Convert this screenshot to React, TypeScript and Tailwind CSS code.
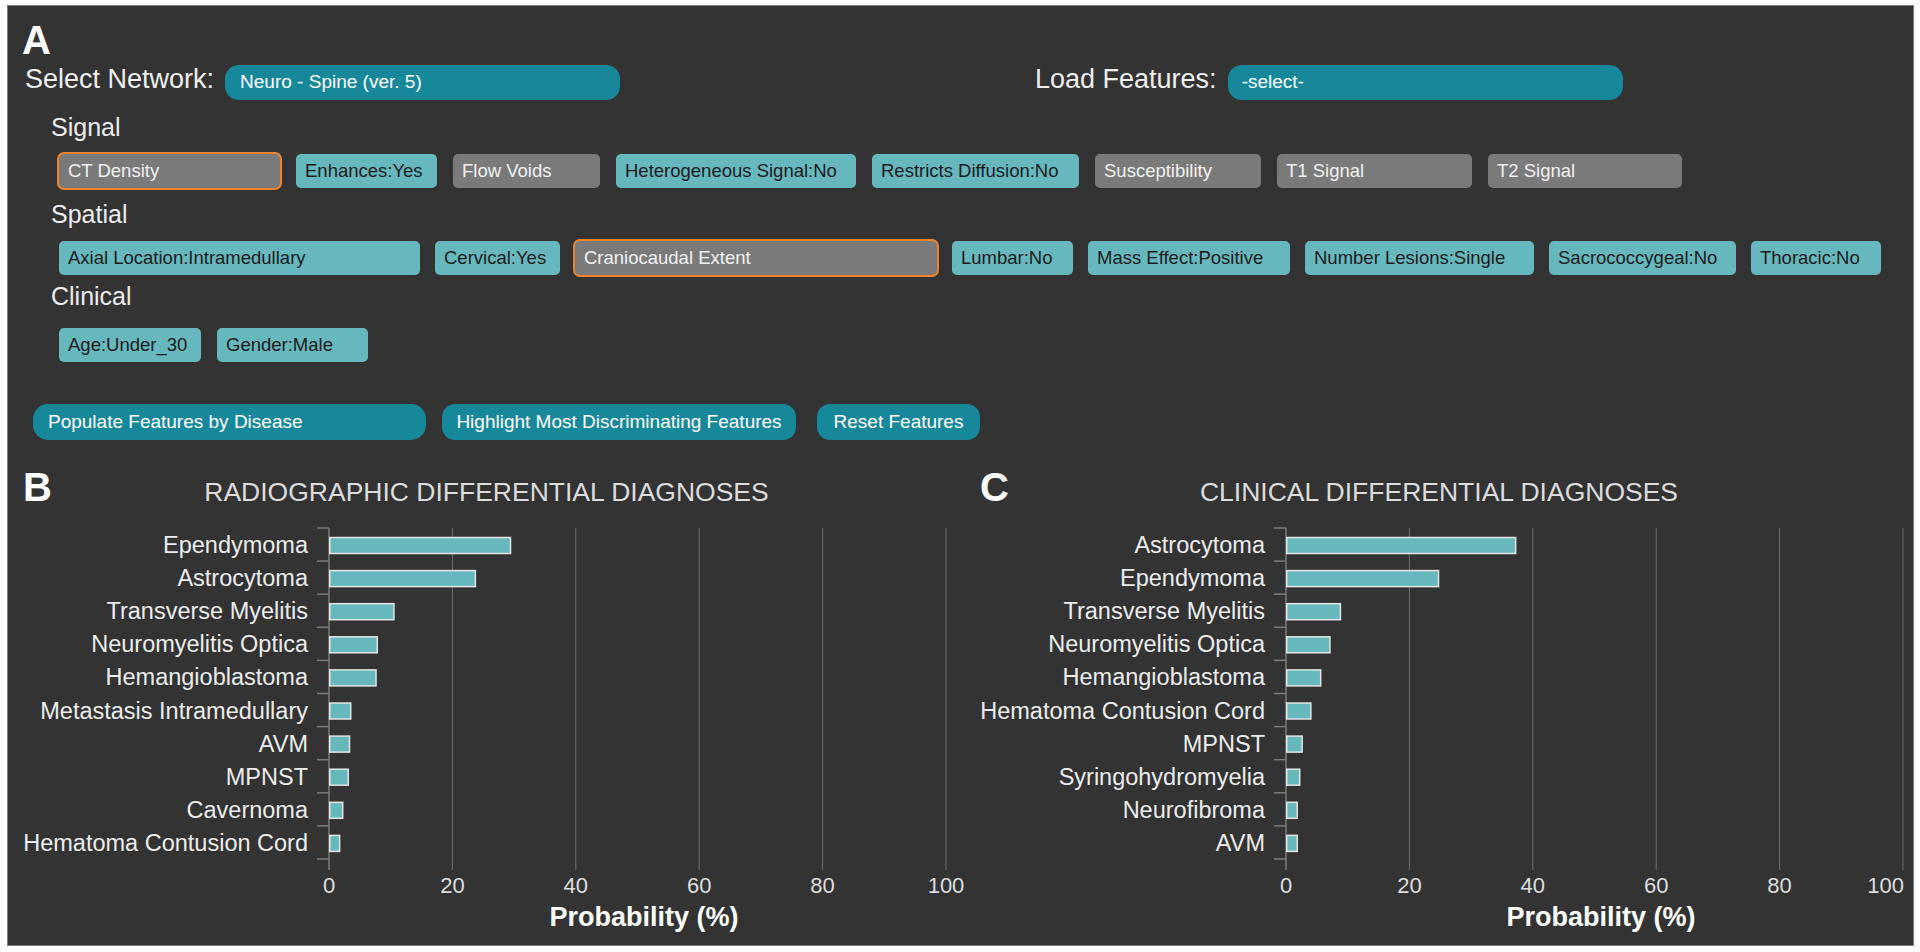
import React from 'react'

interface Feature {
  label: string
  w: string
  set: boolean
  focus?: boolean
}

interface Diagnosis {
  name: string
  p: number
}

const signal: Feature[] = [
  { label: 'CT Density', w: 'w-[221px]', set: false, focus: true },
  { label: 'Enhances:Yes', w: 'w-[141px]', set: true },
  { label: 'Flow Voids', w: 'w-[147px]', set: false },
  { label: 'Heterogeneous Signal:No', w: 'w-[240px]', set: true },
  { label: 'Restricts Diffusion:No', w: 'w-[207px]', set: true },
  { label: 'Susceptibility', w: 'w-[166px]', set: false },
  { label: 'T1 Signal', w: 'w-[195px]', set: false },
  { label: 'T2 Signal', w: 'w-[194px]', set: false },
]

const spatial: Feature[] = [
  { label: 'Axial Location:Intramedullary', w: 'w-[361px]', set: true },
  { label: 'Cervical:Yes', w: 'w-[125px]', set: true },
  { label: 'Craniocaudal Extent', w: 'w-[362px]', set: false, focus: true },
  { label: 'Lumbar:No', w: 'w-[121px]', set: true },
  { label: 'Mass Effect:Positive', w: 'w-[202px]', set: true },
  { label: 'Number Lesions:Single', w: 'w-[229px]', set: true },
  { label: 'Sacrococcygeal:No', w: 'w-[187px]', set: true },
  { label: 'Thoracic:No', w: 'w-[130px]', set: true },
]

const clinical: Feature[] = [
  { label: 'Age:Under_30', w: 'w-[142px]', set: true },
  { label: 'Gender:Male', w: 'w-[151px]', set: true },
]

const radiographic: Diagnosis[] = [
  { name: 'Ependymoma', p: 29.3 },
  { name: 'Astrocytoma', p: 23.6 },
  { name: 'Transverse Myelitis', p: 10.4 },
  { name: 'Neuromyelitis Optica', p: 7.7 },
  { name: 'Hemangioblastoma', p: 7.5 },
  { name: 'Metastasis Intramedullary', p: 3.4 },
  { name: 'AVM', p: 3.2 },
  { name: 'MPNST', p: 3.0 },
  { name: 'Cavernoma', p: 2.1 },
  { name: 'Hematoma Contusion Cord', p: 1.6 },
]

const clinicalDx: Diagnosis[] = [
  { name: 'Astrocytoma', p: 37.1 },
  { name: 'Ependymoma', p: 24.6 },
  { name: 'Transverse Myelitis', p: 8.7 },
  { name: 'Neuromyelitis Optica', p: 7.0 },
  { name: 'Hemangioblastoma', p: 5.5 },
  { name: 'Hematoma Contusion Cord', p: 3.9 },
  { name: 'MPNST', p: 2.5 },
  { name: 'Syringohydromyelia', p: 2.1 },
  { name: 'Neurofibroma', p: 1.7 },
  { name: 'AVM', p: 1.7 },
]

function Chip({ f }: { f: Feature }) {
  const color = f.set ? 'bg-[#67b8be] text-[#1c1c1c]' : 'bg-[#7a7a7a] text-[#f0f0f0]'
  const ring = f.focus ? 'ring-2 ring-[#f0842c]' : ''
  return (
    <div className={`${f.w} ${color} ${ring} h-[34px] rounded-[5px] pl-[9px] flex items-center text-[18.5px] leading-none whitespace-nowrap`}>
      {f.label}
    </div>
  )
}

function GroupLabel({ children }: { children: React.ReactNode }) {
  return <div className="ml-[43px] h-[25px] text-[25px] leading-[25px] text-[#ededed]">{children}</div>
}

// chart drawn in page coordinates through the viewBox
function Chart({ x0, vx, vw, data, endLast }: { x0: number; vx: number; vw: number; data: Diagnosis[]; endLast?: boolean }) {
  const top = 528
  const band = 33.1
  const k = 6.17
  const ticks = [0, 20, 40, 60, 80, 100]
  return (
    <svg width={vw} height={433} viewBox={`${vx} 507 ${vw} 433`} className="block">
      {ticks.slice(1).map(t => (
        <line key={t} x1={x0 + t * k} x2={x0 + t * k} y1={top} y2={870} stroke="#6e6e6e" strokeWidth={1} />
      ))}
      <line x1={x0} x2={x0} y1={top} y2={870} stroke="#7c7c7c" strokeWidth={1.5} />
      {Array.from({ length: 11 }).map((_, i) => (
        <line key={i} x1={x0 - 12} x2={x0} y1={top + i * band} y2={top + i * band} stroke="#7c7c7c" strokeWidth={1.5} />
      ))}
      {data.map((d, i) => (
        <g key={d.name}>
          <rect
            x={x0 + 0.75}
            y={top + i * band + 9.5}
            width={d.p * k}
            height={16}
            fill="#66b8bd"
            stroke="#e4e4e4"
            strokeWidth={1.5}
          />
          <text x={x0 - 21} y={top + (i + 0.5) * band + 8.5} textAnchor="end" fontSize={23.5} fill="#ececec">
            {d.name}
          </text>
        </g>
      ))}
      {ticks.map(t => (
        <text
          key={t}
          x={endLast && t === 100 ? x0 + t * k + 1 : x0 + t * k}
          y={893}
          textAnchor={endLast && t === 100 ? 'end' : 'middle'}
          fontSize={22}
          fill="#dedede"
        >
          {t}
        </text>
      ))}
      <text x={x0 + 315} y={926} textAnchor="middle" fontSize={27} fontWeight="bold" fill="#ffffff">
        Probability (%)
      </text>
    </svg>
  )
}

function Header({ letter, title }: { letter: string; title: string }) {
  return (
    <div className="h-[40px] grid grid-cols-[1fr_auto_1fr] items-baseline">
      <span className="ml-[15px] text-[40px] leading-[40px] font-bold text-white">{letter}</span>
      <span className="text-[26.5px] leading-[26px] text-[#dcdcdc]">{title}</span>
      <span />
    </div>
  )
}

export default function App() {
  return (
    <div className="min-h-screen bg-white pt-[5px] pl-[7px] font-['Liberation_Sans',Arial,sans-serif]">
      <div className="w-[1907px] h-[941px] border border-[#7a7a7a] bg-[#333333] overflow-hidden">
        <div className="ml-[14px] mt-[14px] h-[40px] text-[40px] leading-[40px] font-bold text-white">A</div>

        <div className="mt-[5px] h-[35px] flex items-start">
          <div className="w-[1027px] flex items-start">
            <span className="ml-[17px] mt-[1px] text-[27px] leading-[27px] text-[#efefef]">Select Network:</span>
            <div className="ml-[11px] w-[395px] h-[35px] rounded-[14px] bg-[#17889a] text-white text-[19px] pl-[15px] flex items-center">
              Neuro - Spine (ver. 5)
            </div>
          </div>
          <span className="mt-[1px] text-[27px] leading-[27px] text-[#efefef]">Load Features:</span>
          <div className="ml-[11px] w-[395px] h-[35px] rounded-[14px] bg-[#17889a] text-white text-[19px] pl-[14px] flex items-center">
            -select-
          </div>
        </div>

        <div className="mt-[15px]">
          <GroupLabel>Signal</GroupLabel>
        </div>
        <div className="mt-[14px] ml-[51px] flex gap-[16px]">
          {signal.map(f => <Chip key={f.label} f={f} />)}
        </div>

        <div className="mt-[14px]">
          <GroupLabel>Spatial</GroupLabel>
        </div>
        <div className="mt-[14px] ml-[51px] flex gap-[15px]">
          {spatial.map(f => <Chip key={f.label} f={f} />)}
        </div>

        <div className="mt-[9px]">
          <GroupLabel>Clinical</GroupLabel>
        </div>
        <div className="mt-[19px] ml-[51px] flex gap-[16px]">
          {clinical.map(f => <Chip key={f.label} f={f} />)}
        </div>

        <div className="mt-[42px] ml-[25px] flex items-center text-white text-[19px]">
          <div className="w-[393px] h-[36px] rounded-[15px] bg-[#17889a] pl-[15px] flex items-center">
            Populate Features by Disease
          </div>
          <button className="ml-[16px] w-[354px] h-[36px] rounded-[13px] bg-[#17889a] flex items-center justify-center">
            Highlight Most Discriminating Features
          </button>
          <button className="ml-[21px] w-[163px] h-[36px] rounded-[13px] bg-[#17889a] flex items-center justify-center">
            Reset Features
          </button>
        </div>

        <div className="mt-[27px] flex">
          <div className="w-[957px]">
            <Header letter="B" title="RADIOGRAPHIC DIFFERENTIAL DIAGNOSES" />
            <Chart x0={329} vx={8} vw={957} data={radiographic} />
          </div>
          <div className="w-[948px]">
            <Header letter="C" title="CLINICAL DIFFERENTIAL DIAGNOSES" />
            <Chart x0={1286} vx={965} vw={948} data={clinicalDx} endLast />
          </div>
        </div>
      </div>
    </div>
  )
}
